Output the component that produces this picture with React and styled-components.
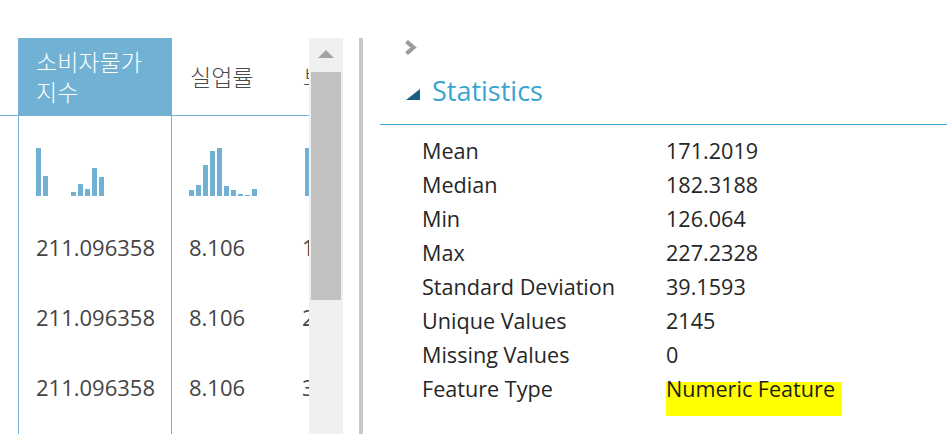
import React from "react";
import styled, { createGlobalStyle } from "styled-components";

const GlobalStyle = createGlobalStyle`
  html, body {
    margin: 0;
    padding: 0;
    background: #ffffff;
  }
  body {
    font-family: "Open Sans", "Noto Sans CJK KR", sans-serif;
    color: #333;
  }
`;

const columns = [
  {
    id: "cpi",
    title: ["소비자물가", "지수"],
    selected: true,
    width: 154,
    bars: [48, 20, 0, 0, 0, 4, 12, 7, 28, 19],
    values: ["211.096358", "211.096358", "211.096358"],
  },
  {
    id: "unemp",
    title: ["실업률"],
    width: 113,
    bars: [6, 11, 31, 45, 48, 10, 6, 2, 1, 7],
    values: ["8.106", "8.106", "8.106"],
  },
  {
    id: "holiday",
    title: ["보험료"],
    width: 120,
    offset: 3,
    bars: [48, 30, 12, 8, 4],
    values: ["1", "2", "3"],
  },
];

const stats = [
  ["Mean", "171.2019"],
  ["Median", "182.3188"],
  ["Min", "126.064"],
  ["Max", "227.2328"],
  ["Standard Deviation", "39.1593"],
  ["Unique Values", "2145"],
  ["Missing Values", "0"],
];

const Histogram = ({ bars, offset = 0 }) => (
  <svg width={offset + bars.length * 7} height="48" style={{ display: "block" }}>
    {bars.map((h, i) =>
      h > 0 ? (
        <rect key={i} x={offset + i * 7} y={48 - h} width="5" height={h} fill="#71b2d4" />
      ) : null
    )}
  </svg>
);

const App = () => {
  return (
    <>
      <GlobalStyle />
      <Page>
        <LeftPane>
          <Table>
            <Spacer>
              <HeaderCell />
            </Spacer>
            {columns.map((col) => (
              <Column key={col.id} style={{ width: col.width }}>
                <HeaderCell selected={col.selected}>
                  <HeaderText selected={col.selected}>
                    {col.title.map((t) => (
                      <div key={t}>{t}</div>
                    ))}
                  </HeaderText>
                </HeaderCell>
                <Body selected={col.selected}>
                  <HistCell>
                    <Histogram bars={col.bars} offset={col.offset} />
                  </HistCell>
                  {col.values.map((v, i) => (
                    <DataCell key={i}>{v}</DataCell>
                  ))}
                </Body>
              </Column>
            ))}
          </Table>
          <Scrollbar>
            <ScrollButton>
              <svg width="16" height="8" viewBox="0 0 16 8">
                <path d="M8 0 L16 8 L0 8 Z" fill="#a3a3a3" />
              </svg>
            </ScrollButton>
            <Thumb />
          </Scrollbar>
          <Divider />
        </LeftPane>

        <RightPane>
          <Collapse>
            <svg width="13" height="15" viewBox="0 0 13 15">
              <path
                d="M2.5 1.5 L9.5 7.5 L2.5 13.5"
                fill="none"
                stroke="#9c9c9c"
                strokeWidth="4.2"
                strokeLinejoin="miter"
              />
            </svg>
          </Collapse>
          <SectionHeader>
            <Caret>
              <svg width="14" height="11" viewBox="0 0 14 11">
                <path d="M14 0 L14 11 L0 11 Z" fill="#1c5d85" />
              </svg>
            </Caret>
            <SectionTitle>Statistics</SectionTitle>
          </SectionHeader>
          <StatsGrid>
            {stats.map(([label, value]) => (
              <React.Fragment key={label}>
                <StatLabel>{label}</StatLabel>
                <StatValue>{value}</StatValue>
              </React.Fragment>
            ))}
            <StatLabel>Feature Type</StatLabel>
            <StatValue>
              <Highlight>Numeric Feature</Highlight>
            </StatValue>
          </StatsGrid>
        </RightPane>
      </Page>
    </>
  );
};

const Page = styled.div`
  display: flex;
  width: 947px;
  height: 434px;
  overflow: hidden;
`;

const LeftPane = styled.div`
  display: flex;
  align-items: stretch;
  padding-top: 38px;
  flex-shrink: 0;
`;

const Table = styled.div`
  display: flex;
  width: 309px;
  overflow: hidden;
`;

const Spacer = styled.div`
  width: 18px;
  flex-shrink: 0;
`;

const Column = styled.div`
  display: flex;
  flex-direction: column;
  flex-shrink: 0;
`;

const HeaderCell = styled.div`
  height: 77px;
  border-bottom: 1px solid #72b2d4;
  background: ${(p) => (p.selected ? "#71b2d4" : "transparent")};
  display: flex;
  align-items: center;
  padding-left: 18px;
  box-sizing: content-box;
`;

const HeaderText = styled.div`
  font-family: "Noto Sans CJK KR", "Open Sans", sans-serif;
  font-size: 23px;
  font-weight: 300;
  line-height: 30px;
  margin-top: -2px;
  color: ${(p) => (p.selected ? "#ffffff" : "#4a4a4a")};
  white-space: nowrap;
`;

const Body = styled.div`
  flex: 1;
  border-left: 1px solid ${(p) => (p.selected ? "#72b2d4" : "transparent")};
  border-right: 1px solid ${(p) => (p.selected ? "#72b2d4" : "transparent")};
  margin-left: ${(p) => (p.selected ? "0" : "-1px")};
  padding-left: 17px;
`;

const HistCell = styled.div`
  height: 96px;
  display: flex;
  align-items: flex-end;
  padding-bottom: 16px;
  box-sizing: border-box;
`;

const DataCell = styled.div`
  height: 70px;
  line-height: 70px;
  font-size: 22px;
  color: #444;
  white-space: nowrap;
`;

const Scrollbar = styled.div`
  width: 34px;
  background: #f0f0f0;
  display: flex;
  flex-direction: column;
  align-items: center;
  flex-shrink: 0;
`;

const ScrollButton = styled.div`
  height: 34px;
  width: 100%;
  display: flex;
  align-items: center;
  justify-content: center;
  svg {
    margin-top: -2px;
  }
`;

const Thumb = styled.div`
  width: 30px;
  height: 228px;
  background: #c1c1c1;
`;

const Divider = styled.div`
  width: 4px;
  margin-left: 16px;
  background: #c8c8c8;
`;

const RightPane = styled.div`
  flex: 1;
  margin-left: 17px;
  display: flex;
  flex-direction: column;
`;

const Collapse = styled.div`
  padding: 40px 0 0 24px;
  height: 14px;
  svg {
    display: block;
  }
`;

const SectionHeader = styled.div`
  display: flex;
  align-items: flex-end;
  padding: 21px 0 18px 26px;
  border-bottom: 1px solid #3aa7cd;
`;

const Caret = styled.div`
  margin-bottom: 6px;
  margin-right: 12px;
  svg {
    display: block;
  }
`;

const SectionTitle = styled.div`
  font-size: 27px;
  line-height: 31px;
  color: #3ba4d0;
`;

const StatsGrid = styled.div`
  display: grid;
  grid-template-columns: 244px 1fr;
  grid-auto-rows: 34px;
  padding: 9px 0 0 42px;
`;

const StatLabel = styled.div`
  font-size: 21.6px;
  line-height: 34px;
  color: #262626;
  white-space: nowrap;
`;

const StatValue = styled(StatLabel)``;

const Highlight = styled.span`
  display: inline-block;
  width: 176px;
  height: 44px;
  vertical-align: top;
  background: linear-gradient(to bottom, transparent 10px, #ffff00 10px);
  color: #1e1e1e;
`;

export default App;
